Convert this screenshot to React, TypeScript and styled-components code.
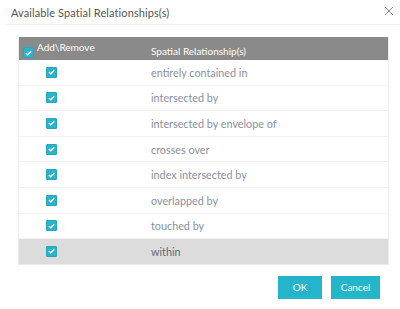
import styled, { createGlobalStyle } from "styled-components";

const GlobalStyle = createGlobalStyle`
  body {
    margin: 0;
    background: #fff;
    font-family: Lato, "Open Sans", "Liberation Sans", sans-serif;
  }
`;

const Dialog = styled.div`
  width: 400px;
  height: 309px;
  background: #fff;
  box-sizing: border-box;
`;

const TitleBar = styled.div`
  display: flex;
  justify-content: space-between;
  align-items: center;
  height: 25px;
  margin-left: 5px;
  padding: 0 6px 0 6px;
  border-bottom: 1px solid #eef0f3;
  box-sizing: border-box;
`;

const Title = styled.span`
  font-size: 11px;
  color: #555;
  letter-spacing: 0.1px;
`;

const Close = styled.span`
  display: flex;
  width: 10px;
  height: 10px;
  margin-top: -2px;
`;

const Table = styled.div`
  margin: 12px 11px 0 18px;
  border: 1px solid #ececec;
  border-top: none;
`;

const HeaderRow = styled.div`
  display: flex;
  height: 23px;
  background: #8a8a8a;
  color: #fff;
  font-size: 10px;
`;

const HeaderAdd = styled.div`
  width: 132px;
  display: flex;
  align-items: flex-start;
  padding: 4px 0 0 4px;
  gap: 3px;
  box-sizing: border-box;
`;

const HeaderLabel = styled.span`
  line-height: 12px;
`;

const HeaderName = styled.div`
  padding-top: 8px;
  line-height: 12px;
`;

const Row = styled.div<{ $active?: boolean }>`
  display: flex;
  align-items: center;
  height: 24.6px;
  border-bottom: 1px solid #f2f2f2;
  background: ${(p) => (p.$active ? "#dcdcdc" : "#fff")};
  font-size: 10.8px;
  color: ${(p) => (p.$active ? "#646a78" : "#8b90a0")};
  &:last-child {
    border-bottom: none;
  }
`;

const CheckCell = styled.div`
  width: 132px;
  padding-left: 27px;
  box-sizing: border-box;
  display: flex;
`;

const Box = styled.span<{ $mt?: number }>`
  display: inline-flex;
  align-items: center;
  justify-content: center;
  width: 11px;
  height: 11px;
  margin-top: ${(p) => p.$mt ?? 0}px;
  background: #2cb3cc;
  border: 1px solid #25a6bd;
  border-radius: 1px;
  box-sizing: border-box;
  flex-shrink: 0;
`;

const Footer = styled.div`
  display: flex;
  justify-content: flex-end;
  gap: 9px;
  padding: 11px 20px 0 0;
`;

const Button = styled.button<{ $w: number }>`
  width: ${(p) => p.$w}px;
  height: 23px;
  background: #24b5ca;
  border: none;
  color: #fff;
  font-family: inherit;
  font-size: 10px;
  padding: 0;
  cursor: pointer;
`;

const Check = () => (
  <svg width="7" height="6" viewBox="0 0 7 6">
    <path d="M0.8 3.1 L2.7 4.8 L6.2 1.2" fill="none" stroke="#fff" strokeWidth="1.3" />
  </svg>
);

const relationships = [
  "entirely contained in",
  "intersected by",
  "intersected by envelope of",
  "crosses over",
  "index intersected by",
  "overlapped by",
  "touched by",
  "within",
];

export default function App() {
  return (
    <Dialog>
      <GlobalStyle />
      <TitleBar>
        <Title>Available Spatial Relationships(s)</Title>
        <Close>
          <svg width="10" height="10" viewBox="0 0 10 10">
            <path d="M1 1 L9 9 M9 1 L1 9" stroke="#8a8a8a" strokeWidth="1" />
          </svg>
        </Close>
      </TitleBar>
      <Table>
        <HeaderRow>
          <HeaderAdd>
            <Box $mt={6}>
              <Check />
            </Box>
            <HeaderLabel>Add\Remove</HeaderLabel>
          </HeaderAdd>
          <HeaderName>Spatial Relationship(s)</HeaderName>
        </HeaderRow>
        {relationships.map((name, i) => (
          <Row key={name} $active={i === relationships.length - 1}>
            <CheckCell>
              <Box>
                <Check />
              </Box>
            </CheckCell>
            <span>{name}</span>
          </Row>
        ))}
      </Table>
      <Footer>
        <Button $w={44}>OK</Button>
        <Button $w={49}>Cancel</Button>
      </Footer>
    </Dialog>
  );
}
